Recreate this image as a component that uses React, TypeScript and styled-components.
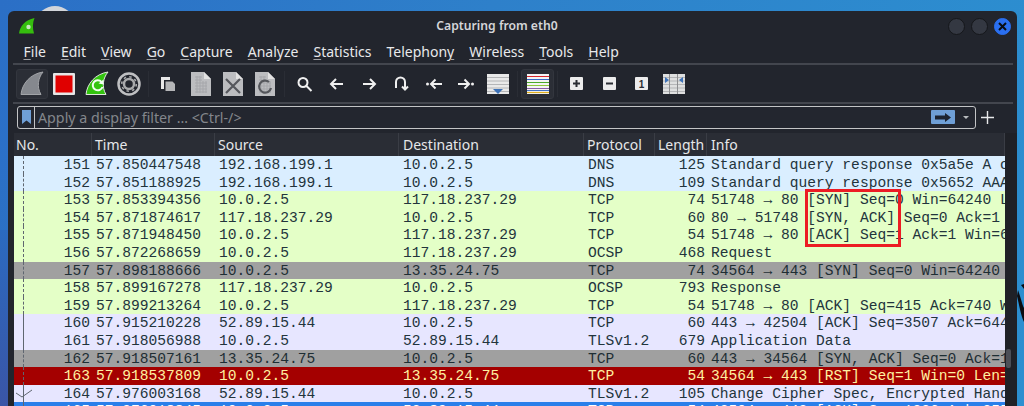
import React from "react";
import styled, { createGlobalStyle, css } from "styled-components";

const Global = createGlobalStyle`
  html, body { margin: 0; padding: 0; width: 1024px; height: 406px; overflow: hidden; }
  #root { width: 1024px; height: 406px; }
`;

const Wallpaper = styled.div`
  position: relative;
  box-sizing: border-box;
  width: 1024px;
  height: 406px;
  overflow: hidden;
  display: flex;
  padding: 11px 7px 0 8px;
  background: linear-gradient(100deg, #2b6fc6 0%, #2e80ca 45%, #2c8fd0 100%);
`;
const Moon = styled.div`
  position: absolute;
  left: 37px;
  top: 6px;
  width: 36px;
  height: 30px;
  border-radius: 50%;
  background: #d2d5da;
`;
const SideBlue = styled.div`
  position: absolute;
  left: 0;
  top: 230px;
  width: 8px;
  height: 176px;
  background: linear-gradient(180deg, #2b6ac0, #3a55a6);
`;
const Dragon = styled.svg`
  position: absolute;
  left: 1017px;
  top: 280px;
`;
const Window = styled.div`
  position: relative;
  flex: 1;
  min-width: 0;
  display: flex;
  flex-direction: column;
  background: #22252d;
  border-radius: 6px 6px 0 0;
  font-family: "Noto Sans", sans-serif;
  color: #e6e7e9;
`;
const TitleBar = styled.div`
  height: 30px;
  flex: none;
  display: flex;
  align-items: center;
  padding: 0 6px 0 11px;
`;
const Title = styled.div`
  flex: 1;
  text-align: center;
  font-size: 12.2px;
  font-weight: 600;
  color: #d5d6d9;
  padding: 0 0 1px 11px;
`;
const WinButtons = styled.div`
  display: flex;
  gap: 6px;
`;
const WinButton = styled.div<{ $close?: boolean }>`
  width: 17px;
  height: 17px;
  border-radius: 50%;
  display: flex;
  align-items: center;
  justify-content: center;
  box-sizing: border-box;
  background: ${(p) => (p.$close ? "#2a6ff0" : "#343842")};
  border: 1px solid ${(p) => (p.$close ? "#2a6ff0" : "#15171b")};
`;
const MenuBar = styled.div`
  height: 22px;
  flex: none;
  display: flex;
  align-items: center;
  gap: 15px;
  padding: 0 0 1px 15.5px;
  box-sizing: border-box;
  font-size: 14px;
`;
const MenuItem = styled.span`
  color: #e8e9eb;
  u { text-underline-offset: 2px; text-decoration-thickness: 1px; text-decoration-color: #a0a2a6; }
`;
const Rule = styled.div`
  height: 2px;
  flex: none;
  margin: 0 4px 0 5px;
  background: #43464e;
`;
const ToolBar = styled.div`
  height: 37px;
  flex: none;
  display: flex;
  align-items: center;
  padding-left: 8px;
`;
const ToolButton = styled.div<{ $active?: boolean }>`
  width: 32.3px;
  height: 30px;
  flex: none;
  display: flex;
  align-items: center;
  justify-content: center;
  box-sizing: border-box;
  border-radius: 3px;
  ${(p) =>
    p.$active &&
    css`
      background: #2b2e36;
      border: 1px solid #33363e;
    `}
`;
const ToolSep = styled.div`
  width: 1px;
  height: 26px;
  flex: none;
  margin: 0 3px;
  background: #2a2d35;
`;
const FilterRow = styled.div`
  flex: none;
  display: flex;
  align-items: center;
  padding: 2px 0 4.5px 9px;
`;
const FilterBox = styled.div`
  box-sizing: border-box;
  width: 959px;
  height: 22.5px;
  flex: none;
  display: flex;
  align-items: center;
  border: 1px solid #c3c4c6;
  border-radius: 3px;
  background: #23262f;
`;
const BookmarkSlot = styled.div`
  width: 17px;
  height: 100%;
  flex: none;
  display: flex;
  align-items: center;
  justify-content: center;
  box-sizing: border-box;
  border-right: 1px solid #c3c4c6;
`;
const Placeholder = styled.span`
  flex: 1;
  padding-left: 3px;
  font-size: 14.25px;
  color: #83868c;
  white-space: nowrap;
`;
const ApplyButton = styled.div`
  width: 24px;
  height: 14px;
  flex: none;
  display: flex;
  align-items: center;
  justify-content: center;
  background: #6f9fd6;
  border-radius: 1px;
`;
const Caret = styled.div`
  width: 0;
  height: 0;
  flex: none;
  margin: 1px 6px 0 8px;
  border-left: 3px solid transparent;
  border-right: 3px solid transparent;
  border-top: 3px solid #b9bbbe;
`;
const AddFilter = styled.div`
  flex: none;
  margin-left: 5px;
  display: flex;
`;
const TableArea = styled.div`
  flex: 1;
  min-height: 0;
  display: flex;
  padding-left: 6px;
  overflow: hidden;
`;
const Table = styled.div`
  position: relative;
  width: 991px;
  flex: none;
  overflow: hidden;
`;
const Gutter = styled.div`
  flex: 1;
  padding-top: 216px;
  background: #1f2127;
`;
const Thumb = styled.div`
  width: 5px;
  height: 19px;
  margin-left: 1px;
  border-radius: 2px;
  background: #4b4e56;
`;
const columns = "78px 123px 184px 185px 71px 52px 1fr";
const HeaderRow = styled.div`
  height: 23px;
  display: grid;
  grid-template-columns: ${columns};
  background: #2a2d35;
  font-size: 14px;
  color: #e6e7e9;
`;
const HeaderCell = styled.div<{ $inset: number }>`
  display: flex;
  align-items: center;
  padding-left: ${(p) => p.$inset}px;
  border-right: 1px solid #3a3d45;
  white-space: nowrap;
  overflow: hidden;
`;
const kinds = {
  dns: { bg: "#daeeff", fg: "#22343c" },
  tcp: { bg: "#e4ffc7", fg: "#22343c" },
  gray: { bg: "#a0a0a0", fg: "#1e2e34" },
  purple: { bg: "#e7e6ff", fg: "#22343c" },
  red: { bg: "#a40000", fg: "#fff0a0" },
  sel: { bg: "#2a7fea", fg: "#ffffff" },
};
type Kind = keyof typeof kinds;
const Row = styled.div<{ $kind: Kind }>`
  height: 17.6px;
  display: grid;
  grid-template-columns: ${columns};
  grid-template-rows: 17.6px;
  align-items: stretch;
  font-family: "Liberation Mono", monospace;
  font-size: 14.6px;
  line-height: 19.4px;
  background: ${(p) => kinds[p.$kind].bg};
  color: ${(p) => kinds[p.$kind].fg};
`;
const NoCell = styled.div`
  display: flex;
  justify-content: space-between;
  padding-right: 2px;
`;
const TreeSlot = styled.div`
  width: 18px;
  flex: none;
  display: flex;
  justify-content: flex-start;
  position: relative;
`;
const TreeLine = styled.div<{ $style: string }>`
  margin-left: 9px;
  width: 0;
  height: 100%;
  border-left: 1px ${(p) => p.$style} #5f6670;
`;
const CheckMark = styled.svg`
  position: absolute;
  left: 2px;
  top: 4px;
`;
const Cell = styled.div`
  padding-left: 4px;
  white-space: nowrap;
  overflow: hidden;
`;
const LengthCell = styled.div`
  padding-right: 2px;
  text-align: right;
`;
const Callout = styled.div`
  position: absolute;
  left: 790.5px;
  top: 56px;
  width: 96px;
  height: 58px;
  box-sizing: border-box;
  border: 3px solid #ec1c24;
`;

const Fin = ({ fill, edge, children }: { fill: string; edge: string; children?: React.ReactNode }) => (
  <svg width="24" height="25" viewBox="0 0 24 25">
    <path d="M1 23.500C2 13 10 3 23 1c-5 6-6.500 15-2 22.500Z" fill={fill} stroke={edge} strokeWidth="1" />
    {children}
  </svg>
);
const Stop = () => (
  <svg width="22" height="22" viewBox="0 0 22 22">
    <rect width="22" height="22" fill="#e6e6e6" rx="1" />
    <rect x="2.500" y="2.500" width="17" height="17" fill="#e00000" />
  </svg>
);
const Gear = () => (
  <svg width="24" height="24" viewBox="0 0 24 24">
    <circle cx="12" cy="12" r="10.500" fill="none" stroke="#bfc0c2" strokeWidth="2.500" />
    <circle cx="12" cy="12" r="5" fill="none" stroke="#a9aaac" strokeWidth="2.500" />
    <circle cx="12" cy="12" r="7.300" fill="none" stroke="#a9aaac" strokeWidth="1.600" strokeDasharray="2.500 3.230" />
  </svg>
);
const OpenFile = () => (
  <svg width="16" height="16" viewBox="0 0 16 16">
    <path d="M1 1h9v3H4v9H1Z" fill="#e8e8e8" />
    <path d="M5.500 5.500h7l2.500 2.500v7H5.500Z" fill="#b5b6b8" />
  </svg>
);
const Doc = ({ children }: { children?: React.ReactNode }) => (
  <svg width="20" height="24" viewBox="0 0 20 24">
    <path d="M0 0h13l7 7v17H0Z" fill="#bcbdc0" />
    <path d="M13 0l7 7h-7Z" fill="#e2e2e2" />
    {children}
  </svg>
);
const DocGrid = () => (
  <path
    d="M4 5h7M4 8h7M4 11h12M4 14h12M4 17h12M4 20h12M6 4v17M9 4v17M12 9v12M15 9v12"
    stroke="#a6a7ab"
    strokeWidth="1"
    fill="none"
  />
);
const Stroke = ({ d, size = 16, color = "#f0f0f0", w = 2 }: { d: string; size?: number; color?: string; w?: number }) => (
  <svg width={size} height={size} viewBox="0 0 16 16">
    <path d={d} fill="none" stroke={color} strokeWidth={w} />
  </svg>
);
const Stripes = ({ children, color = "#e9e9e9" }: { children?: React.ReactNode; color?: string }) => (
  <svg width="22" height="20" viewBox="0 0 22 20">
    <rect width="22" height="20" fill={color} />
    <path d="M0 3.500h22M0 7h22M0 10.500h22M0 14h22M0 17.500h22" stroke="#b4b5b7" strokeWidth="1" />
    {children}
  </svg>
);
const Coloring = () => (
  <svg width="22" height="20" viewBox="0 0 22 20">
    <rect width="22" height="20" fill="#f4f4f4" />
    <path d="M0 2.500h22" stroke="#d8262c" strokeWidth="1" />
    <path d="M0 5.500h22" stroke="#3465c4" strokeWidth="1" />
    <path d="M0 8.500h22" stroke="#4caa2c" strokeWidth="1" />
    <path d="M0 11.500h22" stroke="#8fc63c" strokeWidth="1" />
    <path d="M0 14.500h22" stroke="#8a5aa8" strokeWidth="1" />
    <path d="M0 16.500h22" stroke="#4472c4" strokeWidth="1" />
    <path d="M0 18.500h22" stroke="#e0b020" strokeWidth="1.200" />
  </svg>
);
const Key = ({ children }: { children: React.ReactNode }) => (
  <svg width="13" height="13" viewBox="0 0 13 13">
    <rect width="13" height="13" rx="1" fill="#ececec" />
    {children}
  </svg>
);

type P = { no: number; time: string; src: string; dst: string; proto: string; len: number; info: string; kind: Kind; tree: string };
const packets: P[] = [
  { no: 151, time: "57.850447548", src: "192.168.199.1", dst: "10.0.2.5", proto: "DNS", len: 125, info: "Standard query response 0x5a5e A ocsp.digicert.com", kind: "dns", tree: "dashed" },
  { no: 152, time: "57.851188925", src: "192.168.199.1", dst: "10.0.2.5", proto: "DNS", len: 109, info: "Standard query response 0x5652 AAAA ocsp.digicert.com", kind: "dns", tree: "dashed" },
  { no: 153, time: "57.853394356", src: "10.0.2.5", dst: "117.18.237.29", proto: "TCP", len: 74, info: "51748 → 80 [SYN] Seq=0 Win=64240 Len=0 MSS=1460", kind: "tcp", tree: "dashed" },
  { no: 154, time: "57.871874617", src: "117.18.237.29", dst: "10.0.2.5", proto: "TCP", len: 60, info: "80 → 51748 [SYN, ACK] Seq=0 Ack=1 Win=65535", kind: "tcp", tree: "dashed" },
  { no: 155, time: "57.871948450", src: "10.0.2.5", dst: "117.18.237.29", proto: "TCP", len: 54, info: "51748 → 80 [ACK] Seq=1 Ack=1 Win=64240 Len=0", kind: "tcp", tree: "dashed" },
  { no: 156, time: "57.872268659", src: "10.0.2.5", dst: "117.18.237.29", proto: "OCSP", len: 468, info: "Request", kind: "tcp", tree: "dashed" },
  { no: 157, time: "57.898188666", src: "10.0.2.5", dst: "13.35.24.75", proto: "TCP", len: 74, info: "34564 → 443 [SYN] Seq=0 Win=64240 Len=0 MSS=1460", kind: "gray", tree: "dashed" },
  { no: 158, time: "57.899167278", src: "117.18.237.29", dst: "10.0.2.5", proto: "OCSP", len: 793, info: "Response", kind: "tcp", tree: "dashed" },
  { no: 159, time: "57.899213264", src: "10.0.2.5", dst: "117.18.237.29", proto: "TCP", len: 54, info: "51748 → 80 [ACK] Seq=415 Ack=740 Win=63500 Len=0", kind: "tcp", tree: "dashed" },
  { no: 160, time: "57.915210228", src: "52.89.15.44", dst: "10.0.2.5", proto: "TCP", len: 60, info: "443 → 42504 [ACK] Seq=3507 Ack=644 Win=65535", kind: "purple", tree: "solid" },
  { no: 161, time: "57.918056988", src: "10.0.2.5", dst: "52.89.15.44", proto: "TLSv1.2", len: 679, info: "Application Data", kind: "purple", tree: "solid" },
  { no: 162, time: "57.918507161", src: "13.35.24.75", dst: "10.0.2.5", proto: "TCP", len: 60, info: "443 → 34564 [SYN, ACK] Seq=0 Ack=1 Win=65535", kind: "gray", tree: "dashed" },
  { no: 163, time: "57.918537809", src: "10.0.2.5", dst: "13.35.24.75", proto: "TCP", len: 54, info: "34564 → 443 [RST] Seq=1 Win=0 Len=0", kind: "red", tree: "dashed" },
  { no: 164, time: "57.976003168", src: "52.89.15.44", dst: "10.0.2.5", proto: "TLSv1.2", len: 105, info: "Change Cipher Spec, Encrypted Handshake Message", kind: "purple", tree: "solid" },
  { no: 165, time: "57.976018845", src: "10.0.2.5", dst: "52.89.15.44", proto: "TCP", len: 54, info: "42504 → 443 [ACK] Seq=1236 Ack=3558 Win=64240", kind: "sel", tree: "solid" },
];
const menus: [string, string, string][] = [
  ["", "F", "ile"], ["", "E", "dit"], ["", "V", "iew"], ["", "G", "o"], ["", "C", "apture"], ["", "A", "nalyze"],
  ["", "S", "tatistics"], ["Telephon", "y", ""], ["", "W", "ireless"], ["", "T", "ools"], ["", "H", "elp"],
];
const headers: [string, number][] = [["No.", 2], ["Time", 3], ["Source", 3], ["Destination", 4], ["Protocol", 3], ["Length", 3], ["Info", 4]];

export default function App() {
  return (
    <Wallpaper>
      <Global />
      <Moon />
      <SideBlue />
      <Dragon width="7" height="70" viewBox="0 0 7 70">
        <path d="M1 10C4 18 5 24 7 28v14C4 36 2 24 0 16Z" fill="#0b0d12" />
        <path d="M7 4v5L4 5Z" fill="#0b0d12" />
      </Dragon>
      <Window>
        <TitleBar>
          <svg width="16" height="16" viewBox="0 0 16 16">
            <path d="M0 15.500C1 8 6 2 15.500 0c-2 5-2 10-.5 15.500Z" fill="#35bd0e" />
            <circle cx="9.500" cy="9" r="2.200" fill="#c8e8c0" />
          </svg>
          <Title>Capturing from eth0</Title>
          <WinButtons>
            <WinButton />
            <WinButton />
            <WinButton $close>
              <svg width="9" height="9" viewBox="0 0 9 9">
                <path d="M1 1l7 7M8 1L1 8" stroke="#0a0d14" strokeWidth="2" />
              </svg>
            </WinButton>
          </WinButtons>
        </TitleBar>
        <MenuBar>
          {menus.map(([a, b, c]) => (
            <MenuItem key={a + b + c}>
              {a}
              <u>{b}</u>
              {c}
            </MenuItem>
          ))}
        </MenuBar>
        <Rule />
        <ToolBar>
          <ToolButton $active>
            <Fin fill="#85888e" edge="#a2a4a8" />
          </ToolButton>
          <ToolButton>
            <Stop />
          </ToolButton>
          <ToolButton>
            <Fin fill="#33c40f" edge="#dfe8dc">
              <path d="M16.500 11a5 5 0 1 0 1 5" fill="none" stroke="#f2fff0" strokeWidth="2" />
              <path d="M13.500 12.500l5 1 0-5Z" fill="#f2fff0" />
            </Fin>
          </ToolButton>
          <ToolButton>
            <Gear />
          </ToolButton>
          <ToolSep />
          <ToolButton>
            <OpenFile />
          </ToolButton>
          <ToolButton>
            <Doc>
              <DocGrid />
            </Doc>
          </ToolButton>
          <ToolButton>
            <Doc>
              <path d="M3 7l14 14M17 7L3 21" stroke="#55575c" strokeWidth="2.200" />
            </Doc>
          </ToolButton>
          <ToolButton>
            <Doc>
              <DocGrid />
              <path d="M14 10a6 6 0 1 0 2 6" fill="none" stroke="#55575c" strokeWidth="2.200" />
            </Doc>
          </ToolButton>
          <ToolSep />
          <ToolButton>
            <Stroke d="M1.500 6.500a4.500 4.500 0 1 0 9 0a4.500 4.500 0 1 0 -9 0M9.500 10l5 5" />
          </ToolButton>
          <ToolButton>
            <Stroke d="M14 8H2M7 3L2 8l5 5" />
          </ToolButton>
          <ToolButton>
            <Stroke d="M2 8h12M9 3l5 5-5 5" />
          </ToolButton>
          <ToolButton>
            <Stroke d="M3 12V6a4.500 4.500 0 0 1 9 0v7M9 10.500l3 3 3-3" />
          </ToolButton>
          <ToolButton>
            <svg width="16" height="16" viewBox="0 0 16 16">
              <circle cx="1.500" cy="8" r="1.500" fill="#f0f0f0" />
              <path d="M16 8H5M9.500 3.500L5 8l4.500 4.500" fill="none" stroke="#f0f0f0" strokeWidth="2" />
            </svg>
          </ToolButton>
          <ToolButton>
            <svg width="16" height="16" viewBox="0 0 16 16">
              <circle cx="14.500" cy="8" r="1.500" fill="#f0f0f0" />
              <path d="M0 8h11M6.500 3.500L11 8l-4.500 4.500" fill="none" stroke="#f0f0f0" strokeWidth="2" />
            </svg>
          </ToolButton>
          <ToolButton>
            <Stripes>
              <path d="M6 15h10l-5 5Z" fill="#3d72b8" />
            </Stripes>
          </ToolButton>
          <ToolSep />
          <ToolButton $active>
            <Coloring />
          </ToolButton>
          <ToolSep />
          <ToolButton>
            <Key>
              <path d="M3 6.500h7M6.500 3v7" stroke="#2a2d33" strokeWidth="2" />
            </Key>
          </ToolButton>
          <ToolButton>
            <Key>
              <path d="M3 6.500h7" stroke="#2a2d33" strokeWidth="2" />
            </Key>
          </ToolButton>
          <ToolButton>
            <Key>
              <text x="6.500" y="10.500" textAnchor="middle" fontFamily="Liberation Sans" fontWeight="700" fontSize="10" fill="#2a2d33">
                1
              </text>
            </Key>
          </ToolButton>
          <ToolButton>
            <Stripes color="#dfe0e0">
              <path d="M6.500 0v20M14.500 0v20" stroke="#8d8e90" strokeWidth="1" />
              <path d="M2 3l4 3-4 3ZM20 3l-4 3 4 3Z" fill="#3d72b8" />
            </Stripes>
          </ToolButton>
        </ToolBar>
        <Rule />
        <FilterRow>
          <FilterBox>
            <BookmarkSlot>
              <svg width="9" height="14" viewBox="0 0 9 14">
                <path d="M0 0h9v14L4.500 10.500 0 14Z" fill="#6f9fd6" />
              </svg>
            </BookmarkSlot>
            <Placeholder>Apply a display filter … &lt;Ctrl-/&gt;</Placeholder>
            <ApplyButton>
              <svg width="16" height="9" viewBox="0 0 16 9">
                <path d="M0 2.500h10V0l6 4.500-6 4.500V6.500H0Z" fill="#1c2330" />
              </svg>
            </ApplyButton>
            <Caret />
          </FilterBox>
          <AddFilter>
            <svg width="13" height="13" viewBox="0 0 13 13">
              <path d="M6.500 0v13M0 6.500h13" stroke="#e8e9eb" strokeWidth="1.400" />
            </svg>
          </AddFilter>
        </FilterRow>
        <TableArea>
          <Table>
            <HeaderRow>
              {headers.map(([h, inset]) => (
                <HeaderCell key={h} $inset={inset}>
                  {h}
                </HeaderCell>
              ))}
            </HeaderRow>
            {packets.map((p) => (
              <Row key={p.no} $kind={p.kind}>
                <NoCell>
                  <TreeSlot>
                    <TreeLine $style={p.tree} />
                    {p.no === 164 && (
                      <CheckMark width="17" height="10" viewBox="0 0 17 10">
                        <path d="M0 4l6 4L16 1" fill="none" stroke="#5f6670" strokeWidth="1" />
                      </CheckMark>
                    )}
                  </TreeSlot>
                  <span>{p.no}</span>
                </NoCell>
                <Cell>{p.time}</Cell>
                <Cell>{p.src}</Cell>
                <Cell>{p.dst}</Cell>
                <Cell>{p.proto}</Cell>
                <LengthCell>{p.len}</LengthCell>
                <Cell>{p.info}</Cell>
              </Row>
            ))}
            <Callout />
          </Table>
          <Gutter>
            <Thumb />
          </Gutter>
        </TableArea>
      </Window>
    </Wallpaper>
  );
}
